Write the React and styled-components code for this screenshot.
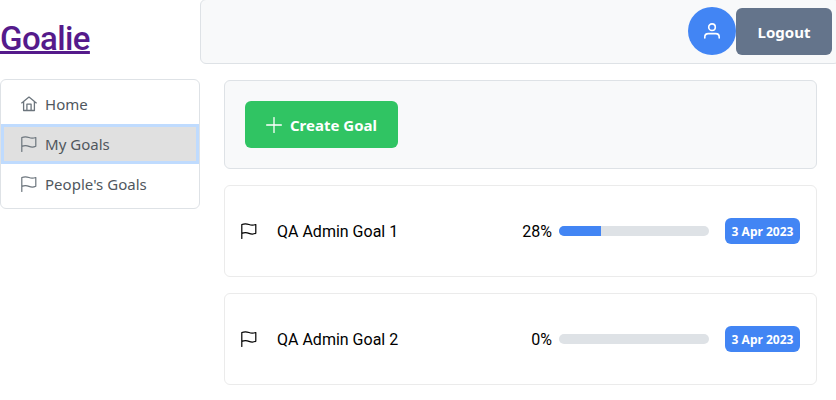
import React from "react";
import styled, { createGlobalStyle } from "styled-components";

const GlobalStyle = createGlobalStyle`
  *, *::before, *::after { box-sizing: border-box; }
  body {
    margin: 0;
    background: #fff;
    color: #000;
    font: 16px/19px Roboto, sans-serif;
    overflow: hidden;
  }
`;

const uiFont = `"Noto Sans", "Open Sans", sans-serif`;

const Page = styled.div`
  display: flex;
  height: 400px;
  overflow: hidden;
`;

const Sidebar = styled.aside`
  flex: 0 0 200px;
`;

const Brand = styled.a`
  display: block;
  width: max-content;
  margin: 20px 0 21px;
  color: #551a8b;
  font-size: 33px;
  font-weight: 500;
  line-height: 38px;
  letter-spacing: -0.6px;
  text-decoration: underline;
  text-decoration-thickness: 3px;
  text-underline-offset: 1px;
  text-decoration-skip-ink: none;
`;

const Menu = styled.nav`
  height: 130px;
  padding: 4px 0;
  border: 1px solid #dee2e6;
  border-radius: 6px;
`;

const MenuItem = styled.a`
  display: flex;
  align-items: center;
  gap: 8px;
  height: 40px;
  padding: 0 20px;
  background: ${(p) => (p.$active ? "#e0e0e0" : "transparent")};
  box-shadow: ${(p) => (p.$active ? "inset 0 0 0 3px #bfdbfe" : "none")};
  color: #6c757d;
`;

const MenuLabel = styled.span`
  color: #50575e;
  font: 400 15px/20px ${uiFont};
  letter-spacing: 0.02px;
`;

const Main = styled.main`
  flex: 1;
  min-width: 0;
`;

const TopBar = styled.header`
  display: flex;
  align-items: flex-end;
  justify-content: flex-end;
  width: 640px;
  height: 65px;
  margin-top: -1px;
  padding: 0 7px 8px 0;
  background: #f8f9fa;
  border: 1px solid #dee2e6;
  border-radius: 6px;
`;

const Avatar = styled.button`
  display: grid;
  place-items: center;
  width: 48px;
  height: 48px;
  padding: 0;
  border: 0;
  border-radius: 50%;
  background: #4285f4;
  color: #fff;
`;

const Button = styled.button`
  display: flex;
  align-items: center;
  justify-content: center;
  gap: 8px;
  width: ${(p) => p.$width}px;
  height: 47px;
  padding: 0;
  border: 0;
  border-radius: 6px;
  background: ${(p) => p.$color};
  color: #fff;
  font: 700 15px/20px ${uiFont};
  white-space: nowrap;
`;

const Content = styled.section`
  display: flex;
  flex-direction: column;
  gap: 16px;
  width: 593px;
  margin: 16px 0 0 24px;
`;

const Toolbar = styled.div`
  height: 89px;
  padding: 20px;
  background: #f8f9fa;
  border: 1px solid #dee2e6;
  border-radius: 6px;
`;

const GoalCard = styled.article`
  display: flex;
  align-items: center;
  height: 92px;
  padding: 0 16px;
  border: 1px solid #ebebeb;
  border-radius: 6px;
`;

const GoalTitle = styled.span`
  flex: 1;
  margin-left: 20px;
`;

const Percent = styled.span`
  margin-right: 7px;
`;

const Track = styled.div`
  width: 150px;
  height: 10px;
  overflow: hidden;
  border-radius: 6px;
  background: #dee2e6;
`;

const Fill = styled.div`
  height: 100%;
  background: #4285f4;
`;

const DateTag = styled.time`
  width: 75px;
  height: 26px;
  margin-left: 16px;
  border-radius: 6px;
  background: #4285f4;
  color: #fff;
  font: 700 12px/27px ${uiFont};
  text-align: center;
  white-space: nowrap;
`;

const Glyph = styled.svg`
  display: block;
  flex: none;
  width: 16px;
  height: 16px;
  fill: none;
  stroke: currentColor;
  stroke-width: ${(p) => p.$weight || 1.2};
  stroke-linecap: round;
  stroke-linejoin: round;
`;

const FlagIcon = () => (
  <Glyph viewBox="0 0 16 16">
    <path d="M.8 15.4V1.5C4 .2 6 .7 8 1.5C10.2 2.4 12.4 2.3 14.8 1.5V10.3C12.4 11.4 10.2 11.3 8 10.4C5.8 9.5 3.5 9.4 .8 10.4" />
  </Glyph>
);

const HomeIcon = () => (
  <Glyph viewBox="0 0 16 16" $weight={1.3}>
    <path d="M.7 6.9L8 1.1L15.3 6.9M2.6 5.5V14.5H13.4V5.5M5.9 14.5V8.2H10.1V14.5" />
  </Glyph>
);

const UserIcon = () => (
  <Glyph viewBox="0 0 16 16" $weight={1.6}>
    <circle cx="8" cy="4.2" r="3.3" />
    <path d="M.8 15V14C.8 11.8 2.3 10.6 4.3 10.6H11.7C13.7 10.6 15.2 11.8 15.2 14V15" />
  </Glyph>
);

const PlusIcon = () => (
  <Glyph viewBox="0 0 16 16" $weight={1.3}>
    <path d="M8 .6V15.4M.6 8H15.4" />
  </Glyph>
);

const menu = [
  { label: "Home", Icon: HomeIcon },
  { label: "My Goals", Icon: FlagIcon, active: true },
  { label: "People's Goals", Icon: FlagIcon },
];

const goals = [
  { title: "QA Admin Goal 1", progress: 28, due: "3 Apr 2023" },
  { title: "QA Admin Goal 2", progress: 0, due: "3 Apr 2023" },
];

export default function App() {
  return (
    <>
      <GlobalStyle />
      <Page>
        <Sidebar>
          <Brand>Goalie</Brand>
          <Menu>
            {menu.map(({ label, Icon, active }) => (
              <MenuItem key={label} $active={active}>
                <Icon />
                <MenuLabel>{label}</MenuLabel>
              </MenuItem>
            ))}
          </Menu>
        </Sidebar>
        <Main>
          <TopBar>
            <Avatar aria-label="Profile"><UserIcon /></Avatar>
            <Button $width={96} $color="#64748b">Logout</Button>
          </TopBar>
          <Content>
            <Toolbar>
              <Button $width={153} $color="#30c463">
                <PlusIcon />
                <span>Create Goal</span>
              </Button>
            </Toolbar>
            {goals.map((goal) => (
              <GoalCard key={goal.title}>
                <FlagIcon />
                <GoalTitle>{goal.title}</GoalTitle>
                <Percent>{goal.progress}%</Percent>
                <Track><Fill style={{ width: `${goal.progress}%` }} /></Track>
                <DateTag>{goal.due}</DateTag>
              </GoalCard>
            ))}
          </Content>
        </Main>
      </Page>
    </>
  );
}
